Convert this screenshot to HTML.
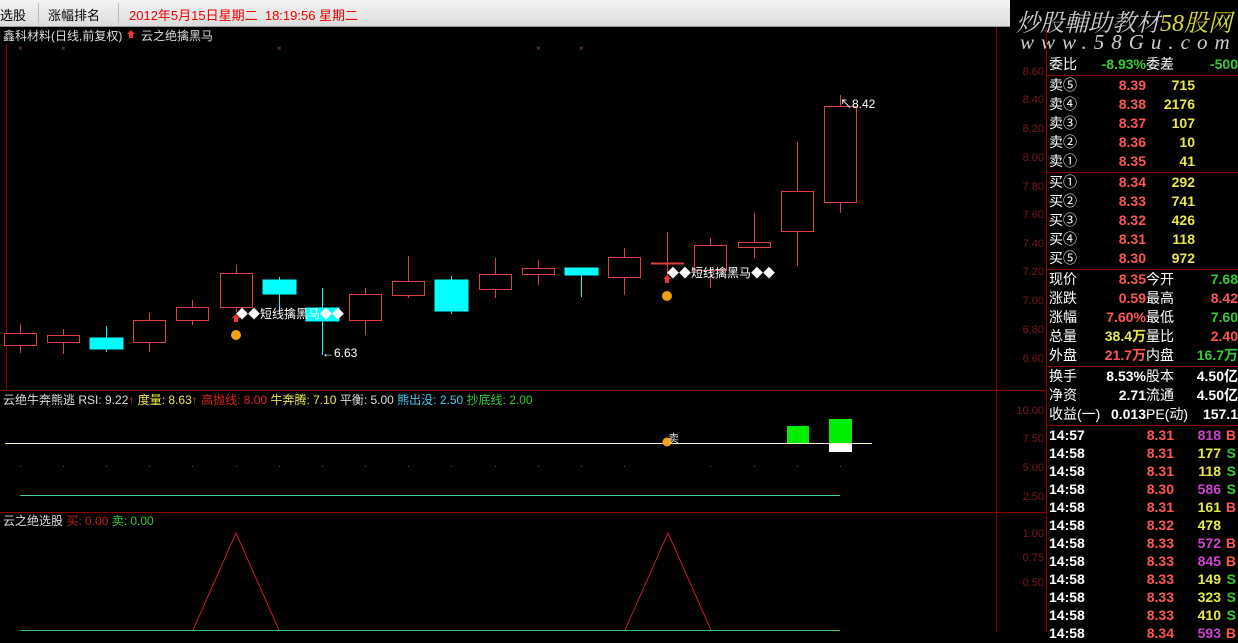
<!DOCTYPE html>
<html><head><meta charset="utf-8"><style>
body{margin:0;width:1238px;height:632px;overflow:hidden;background:#000;font-family:"Liberation Sans","Noto Sans CJK SC",sans-serif;position:relative}
.top{position:absolute;left:0;top:0;width:1010px;height:26px;background:linear-gradient(#f4f4f4,#dcdcdc);border-bottom:1px solid #999;font-size:13px}
.top span{position:absolute;top:5px}
.logo{position:absolute;left:1010px;top:0;width:228px;height:55px;background:#000;font-style:italic;color:#ccc;font-family:"Liberation Serif","Noto Serif CJK SC",serif}
.rp{position:absolute;left:1047px;top:55px;width:191px;height:577px;font-size:14px;font-weight:bold}
.r{position:absolute;left:0;width:191px;height:19px;line-height:19px;white-space:nowrap}
.r span{position:absolute}
.w{color:#fff}.rd{color:#ff5555}.yl{color:#e8e84c}.gr{color:#33cc33}.pu{color:#cc44cc}
svg text{font-family:"Liberation Sans","Noto Sans CJK SC",sans-serif}
</style></head><body>
<div class="top">
<span style="left:0">选股</span>
<span style="left:48px">涨幅排名</span>
<span style="left:129px;color:#e00">2012年5月15日星期二&nbsp; 18:19:56 星期二</span>
<div style="position:absolute;left:38px;top:3px;width:1px;height:20px;background:#bbb"></div>
<div style="position:absolute;left:118px;top:3px;width:1px;height:20px;background:#bbb"></div>
</div>
<div class="logo">
<div style="position:absolute;left:6px;top:3px;font-size:24px;letter-spacing:0px">炒股輔助教材<span style="color:#dada40">58股网</span></div>
<div style="position:absolute;left:10px;top:30px;font-size:21px;letter-spacing:7px">www.58Gu.com</div>
</div>
<svg width="1047" height="632" style="position:absolute;left:0;top:0" xmlns="http://www.w3.org/2000/svg">
<g stroke="#800" stroke-width="1" fill="none">
<line x1="996.5" y1="27" x2="996.5" y2="632"/><line x1="1046.5" y1="27" x2="1046.5" y2="632"/>
<line x1="0" y1="390.5" x2="1047" y2="390.5"/><line x1="0" y1="512.5" x2="1047" y2="512.5"/>
<line x1="6.5" y1="44" x2="6.5" y2="390"/>
</g>
<text x="3" y="40" fill="#ddd" font-size="12">鑫科材料(日线,前复权)</text>
<path d="M131 30 l4 4 h-2 v4 h-4 v-4 h-2z" fill="#e33"/>
<text x="141" y="40" fill="#ddd" font-size="12">云之绝擒黑马</text>
<g fill="#a04060" font-size="8"><text x="18" y="51">×</text><text x="61" y="51">×</text><text x="277" y="51">×</text><text x="536" y="51">×</text><text x="579" y="51">×</text></g>
<g fill="#7a1a20" font-size="11" text-anchor="end">
<text x="1044" y="75">8.60</text><text x="1044" y="103">8.40</text><text x="1044" y="132">8.20</text><text x="1044" y="161">8.00</text><text x="1044" y="190">7.80</text><text x="1044" y="218">7.60</text><text x="1044" y="247">7.40</text><text x="1044" y="275">7.20</text><text x="1044" y="304">7.00</text><text x="1044" y="333">6.80</text><text x="1044" y="362">6.60</text>
<text x="1044" y="414">10.00</text><text x="1044" y="442">7.50</text><text x="1044" y="471">5.00</text><text x="1044" y="500">2.50</text>
<text x="1044" y="537">1.00</text><text x="1044" y="561">0.75</text><text x="1044" y="586">0.50</text>
</g>
<g stroke="#e04040" stroke-width="1" fill="none">
<line x1="20.5" y1="324" x2="20.5" y2="353"/><rect x="4.5" y="333.5" width="32" height="12" fill="#000"/>
<line x1="63.5" y1="329" x2="63.5" y2="354"/><rect x="47.5" y="335.5" width="32" height="7" fill="#000"/>
<line x1="149.5" y1="313" x2="149.5" y2="352"/><rect x="133.5" y="320.5" width="32" height="22" fill="#000"/>
<line x1="192.5" y1="300" x2="192.5" y2="325"/><rect x="176.5" y="307.5" width="32" height="13" fill="#000"/>
<line x1="236.5" y1="265" x2="236.5" y2="312"/><rect x="220.5" y="273.5" width="32" height="34" fill="#000"/>
<line x1="365.5" y1="288" x2="365.5" y2="335"/><rect x="349.5" y="294.5" width="32" height="26" fill="#000"/>
<line x1="408.5" y1="256" x2="408.5" y2="298"/><rect x="392.5" y="281.5" width="32" height="14" fill="#000"/>
<line x1="495.5" y1="258" x2="495.5" y2="298"/><rect x="479.5" y="274.5" width="32" height="15" fill="#000"/>
<line x1="538.5" y1="260" x2="538.5" y2="285"/><rect x="522.5" y="268.5" width="32" height="6" fill="#000"/>
<line x1="624.5" y1="248" x2="624.5" y2="295"/><rect x="608.5" y="257.5" width="32" height="20" fill="#000"/>
<line x1="667.5" y1="232" x2="667.5" y2="275"/><line x1="651" y1="263.5" x2="684" y2="263.5" stroke-width="2"/>
<line x1="710.5" y1="238" x2="710.5" y2="288"/><rect x="694.5" y="245.5" width="32" height="25" fill="#000"/>
<line x1="754.5" y1="213" x2="754.5" y2="258"/><rect x="738.5" y="242.5" width="32" height="5" fill="#000"/>
<line x1="797.5" y1="142" x2="797.5" y2="266"/><rect x="781.5" y="191.5" width="32" height="40" fill="#000"/>
<line x1="840.5" y1="95" x2="840.5" y2="213"/><rect x="824.5" y="106.5" width="32" height="96" fill="#000"/>
</g>
<g stroke="#00ffff" fill="#00ffff">
<line x1="106.5" y1="326" x2="106.5" y2="352"/><rect x="90" y="338" width="33" height="11"/>
<line x1="279.5" y1="277" x2="279.5" y2="308"/><rect x="263" y="280" width="33" height="14"/>
<line x1="322.5" y1="288" x2="322.5" y2="355"/><rect x="306" y="308" width="33" height="13"/>
<line x1="451.5" y1="276" x2="451.5" y2="314"/><rect x="435" y="280" width="33" height="31"/>
<line x1="581.5" y1="268" x2="581.5" y2="297"/><rect x="565" y="268" width="33" height="7"/>
</g>
<text x="236" y="318" fill="#fff" font-size="12">◆◆短线擒黑马◆◆</text>
<text x="667" y="277" fill="#fff" font-size="12">◆◆短线擒黑马◆◆</text>
<circle cx="236" cy="335" r="5" fill="#f0a010"/><path d="M236 314 l4 4 h-2 v4 h-4 v-4 h-2z" fill="#e33"/>
<circle cx="667" cy="296" r="5" fill="#f0a010"/><path d="M667 275 l4 4 h-2 v4 h-4 v-4 h-2z" fill="#e33"/>
<text x="322" y="357" fill="#fff" font-size="12">←6.63</text>
<text x="840" y="108" fill="#fff" font-size="12">↖8.42</text>
<text x="3" y="404" font-size="12"><tspan fill="#ddd">云绝牛奔熊逃 RSI: 9.22</tspan><tspan fill="#e33">↑ </tspan><tspan fill="#e8e84c">度量: 8.63</tspan><tspan fill="#e33">↑ </tspan><tspan fill="#e02020">高抛线: 8.00 </tspan><tspan fill="#e8e84c">牛奔腾: 7.10 </tspan><tspan fill="#ddd"> 平衡: 5.00 </tspan><tspan fill="#44ccee">熊出没: 2.50 </tspan><tspan fill="#33cc33">抄底线: 2.00</tspan></text>
<line x1="5" y1="443.5" x2="872" y2="443.5" stroke="#f0f0c0"/>
<line x1="20" y1="495.5" x2="840" y2="495.5" stroke="#40d0a0"/>
<rect x="787" y="426" width="22" height="17" fill="#00ee00"/>
<rect x="829" y="419" width="23" height="24" fill="#00ee00"/>
<rect x="829" y="444" width="23" height="8" fill="#fff"/>
<circle cx="667" cy="442" r="4.5" fill="#f0a010"/><text x="668" y="442" fill="#ddd" font-size="11">卖</text>
<g fill="#555"><rect x="20" y="466" width="1" height="1"/><rect x="63" y="466" width="1" height="1"/><rect x="106" y="466" width="1" height="1"/><rect x="149" y="466" width="1" height="1"/><rect x="192" y="466" width="1" height="1"/><rect x="236" y="466" width="1" height="1"/><rect x="279" y="466" width="1" height="1"/><rect x="322" y="466" width="1" height="1"/><rect x="365" y="466" width="1" height="1"/><rect x="408" y="466" width="1" height="1"/><rect x="451" y="466" width="1" height="1"/><rect x="495" y="466" width="1" height="1"/><rect x="538" y="466" width="1" height="1"/><rect x="581" y="466" width="1" height="1"/><rect x="624" y="466" width="1" height="1"/><rect x="710" y="466" width="1" height="1"/><rect x="754" y="466" width="1" height="1"/><rect x="797" y="466" width="1" height="1"/><rect x="840" y="466" width="1" height="1"/></g>
<text x="3" y="525" font-size="12"><tspan fill="#ddd">云之绝选股 </tspan><tspan fill="#c02020">买: 0.00 </tspan><tspan fill="#33cc33">卖: 0.00</tspan></text>
<polyline points="193,630 236,533 279,630" stroke="#c02030" fill="none"/>
<polyline points="625,630 668,533 711,630" stroke="#c02030" fill="none"/>
<line x1="20" y1="630.5" x2="840" y2="630.5" stroke="#30c060"/>
</svg>
<div class="rp">
<div class="r" style="top:0"><span class="w" style="left:2px;font-weight:normal">委比</span><span class="gr" style="right:92px">-8.93%</span><span class="w" style="left:99px;font-weight:normal">委差</span><span class="gr" style="right:0">-500</span></div>
<div style="position:absolute;left:0;top:20px;width:191px;height:1px;background:#800"></div>
<div class="r" style="top:21px"><span class="w" style="left:2px;font-weight:normal">卖⑤</span><span class="rd" style="right:92px">8.39</span><span class="yl" style="right:43px">715</span></div>
<div class="r" style="top:40px"><span class="w" style="left:2px;font-weight:normal">卖④</span><span class="rd" style="right:92px">8.38</span><span class="yl" style="right:43px">2176</span></div>
<div class="r" style="top:59px"><span class="w" style="left:2px;font-weight:normal">卖③</span><span class="rd" style="right:92px">8.37</span><span class="yl" style="right:43px">107</span></div>
<div class="r" style="top:78px"><span class="w" style="left:2px;font-weight:normal">卖②</span><span class="rd" style="right:92px">8.36</span><span class="yl" style="right:43px">10</span></div>
<div class="r" style="top:97px"><span class="w" style="left:2px;font-weight:normal">卖①</span><span class="rd" style="right:92px">8.35</span><span class="yl" style="right:43px">41</span></div>
<div style="position:absolute;left:0;top:117px;width:191px;height:1px;background:#800"></div>
<div class="r" style="top:118px"><span class="w" style="left:2px;font-weight:normal">买①</span><span class="rd" style="right:92px">8.34</span><span class="yl" style="right:43px">292</span></div>
<div class="r" style="top:137px"><span class="w" style="left:2px;font-weight:normal">买②</span><span class="rd" style="right:92px">8.33</span><span class="yl" style="right:43px">741</span></div>
<div class="r" style="top:156px"><span class="w" style="left:2px;font-weight:normal">买③</span><span class="rd" style="right:92px">8.32</span><span class="yl" style="right:43px">426</span></div>
<div class="r" style="top:175px"><span class="w" style="left:2px;font-weight:normal">买④</span><span class="rd" style="right:92px">8.31</span><span class="yl" style="right:43px">118</span></div>
<div class="r" style="top:194px"><span class="w" style="left:2px;font-weight:normal">买⑤</span><span class="rd" style="right:92px">8.30</span><span class="yl" style="right:43px">972</span></div>
<div style="position:absolute;left:0;top:214px;width:191px;height:1px;background:#800"></div>
<div class="r" style="top:215px"><span class="w" style="left:2px;font-weight:normal">现价</span><span class="rd" style="right:92px">8.35</span><span class="w" style="left:99px;font-weight:normal">今开</span><span class="gr" style="right:0">7.68</span></div>
<div class="r" style="top:234px"><span class="w" style="left:2px;font-weight:normal">涨跌</span><span class="rd" style="right:92px">0.59</span><span class="w" style="left:99px;font-weight:normal">最高</span><span class="rd" style="right:0">8.42</span></div>
<div class="r" style="top:253px"><span class="w" style="left:2px;font-weight:normal">涨幅</span><span class="rd" style="right:92px">7.60%</span><span class="w" style="left:99px;font-weight:normal">最低</span><span class="gr" style="right:0">7.60</span></div>
<div class="r" style="top:272px"><span class="w" style="left:2px;font-weight:normal">总量</span><span class="yl" style="right:92px">38.4万</span><span class="w" style="left:99px;font-weight:normal">量比</span><span class="rd" style="right:0">2.40</span></div>
<div class="r" style="top:291px"><span class="w" style="left:2px;font-weight:normal">外盘</span><span class="rd" style="right:92px">21.7万</span><span class="w" style="left:99px;font-weight:normal">内盘</span><span class="gr" style="right:0">16.7万</span></div>
<div style="position:absolute;left:0;top:311px;width:191px;height:1px;background:#800"></div>
<div class="r" style="top:312px"><span class="w" style="left:2px;font-weight:normal">换手</span><span class="w" style="right:92px">8.53%</span><span class="w" style="left:99px;font-weight:normal">股本</span><span class="w" style="right:0">4.50亿</span></div>
<div class="r" style="top:331px"><span class="w" style="left:2px;font-weight:normal">净资</span><span class="w" style="right:92px">2.71</span><span class="w" style="left:99px;font-weight:normal">流通</span><span class="w" style="right:0">4.50亿</span></div>
<div class="r" style="top:350px"><span class="w" style="left:2px;font-weight:normal">收益(一)</span><span class="w" style="right:92px">0.013</span><span class="w" style="left:99px;font-weight:normal">PE(动)</span><span class="w" style="right:0">157.1</span></div>
<div style="position:absolute;left:0;top:370px;width:191px;height:1px;background:#800"></div>
<div class="r" style="top:371px"><span class="w" style="left:2px">14:57</span><span class="rd" style="right:64px">8.31</span><span class="pu" style="right:17px">818</span><span class="rd" style="right:2px">B</span></div>
<div class="r" style="top:389px"><span class="w" style="left:2px">14:58</span><span class="rd" style="right:64px">8.31</span><span class="yl" style="right:17px">177</span><span class="gr" style="right:2px">S</span></div>
<div class="r" style="top:407px"><span class="w" style="left:2px">14:58</span><span class="rd" style="right:64px">8.31</span><span class="yl" style="right:17px">118</span><span class="gr" style="right:2px">S</span></div>
<div class="r" style="top:425px"><span class="w" style="left:2px">14:58</span><span class="rd" style="right:64px">8.30</span><span class="pu" style="right:17px">586</span><span class="gr" style="right:2px">S</span></div>
<div class="r" style="top:443px"><span class="w" style="left:2px">14:58</span><span class="rd" style="right:64px">8.31</span><span class="yl" style="right:17px">161</span><span class="rd" style="right:2px">B</span></div>
<div class="r" style="top:461px"><span class="w" style="left:2px">14:58</span><span class="rd" style="right:64px">8.32</span><span class="yl" style="right:17px">478</span></div>
<div class="r" style="top:479px"><span class="w" style="left:2px">14:58</span><span class="rd" style="right:64px">8.33</span><span class="pu" style="right:17px">572</span><span class="rd" style="right:2px">B</span></div>
<div class="r" style="top:497px"><span class="w" style="left:2px">14:58</span><span class="rd" style="right:64px">8.33</span><span class="pu" style="right:17px">845</span><span class="rd" style="right:2px">B</span></div>
<div class="r" style="top:515px"><span class="w" style="left:2px">14:58</span><span class="rd" style="right:64px">8.33</span><span class="yl" style="right:17px">149</span><span class="gr" style="right:2px">S</span></div>
<div class="r" style="top:533px"><span class="w" style="left:2px">14:58</span><span class="rd" style="right:64px">8.33</span><span class="yl" style="right:17px">323</span><span class="gr" style="right:2px">S</span></div>
<div class="r" style="top:551px"><span class="w" style="left:2px">14:58</span><span class="rd" style="right:64px">8.33</span><span class="yl" style="right:17px">410</span><span class="gr" style="right:2px">S</span></div>
<div class="r" style="top:569px"><span class="w" style="left:2px">14:58</span><span class="rd" style="right:64px">8.34</span><span class="pu" style="right:17px">593</span><span class="rd" style="right:2px">B</span></div>
</div>
</body></html>
